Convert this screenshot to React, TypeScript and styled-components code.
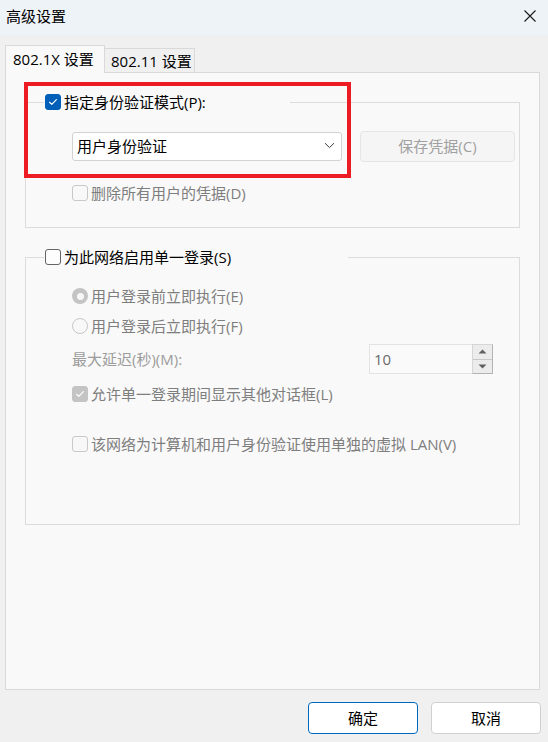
import React from "react";
import styled, { createGlobalStyle, css } from "styled-components";

const Global = createGlobalStyle`
  html, body { margin: 0; padding: 0; background: #f0f0f0; }
  body {
    font-family: "Open Sans", "Noto Sans CJK SC", sans-serif;
    font-size: 15px;
    color: #000;
  }
  * { box-sizing: border-box; }
`;

const Window = styled.div`
  position: relative;
  width: 548px;
  height: 742px;
  display: flex;
  flex-direction: column;
  background: #f0f0f0;
  overflow: hidden;
`;

const TitleBar = styled.div`
  flex: none;
  height: 35px;
  display: flex;
  align-items: center;
  justify-content: space-between;
  padding: 0 12px 3px 6px;
  background: #eef3f8;
`;

const Title = styled.span`
  font-size: 15px;
  line-height: 20px;
  color: #000;
`;

const CloseButton = styled.button`
  width: 12px;
  height: 12px;
  padding: 0;
  border: 0;
  background: none;
  display: flex;
`;

const TabStrip = styled.div`
  flex: none;
  display: flex;
  align-items: flex-end;
  height: 27px;
  margin-top: 10px;
  padding-left: 5px;
`;

const Tab = styled.div<{ $active?: boolean }>`
  position: relative;
  display: flex;
  align-items: center;
  font-size: 15px;
  line-height: 20px;
  border: 1px solid #d9d9d9;
  border-bottom: none;
  white-space: nowrap;
  ${({ $active }) =>
    $active
      ? css`
          z-index: 1;
          height: 28px;
          margin-bottom: -1px;
          width: 100px;
          padding: 0 0 1px 7px;
          background: #f9f9f9;
        `
      : css`
          height: 24px;
          width: 91px;
          margin-left: -1px;
          padding: 0 0 0 6px;
          background: #f0f0f0;
        `}
`;

const Panel = styled.div`
  flex: none;
  width: 535px;
  height: 618px;
  margin-left: 5px;
  border: 1px solid #d9d9d9;
  background: #f9f9f9;
  padding: 29px 19px 0 19px;
  display: flex;
  flex-direction: column;
`;

const GroupBox = styled.div<{ $gap?: number }>`
  border: 1px solid #dcdcdc;
  display: flex;
  flex-direction: column;
  margin-top: ${({ $gap }) => $gap ?? 0}px;
`;

const Legend = styled.div<{ $width: number }>`
  display: flex;
  align-items: center;
  gap: 3px;
  height: 18px;
  width: ${({ $width }) => $width}px;
  margin: -10px 0 0 18px;
  padding-left: 1px;
  background: #f9f9f9;
  font-size: 15px;
  line-height: 18px;
  color: #000;
  white-space: nowrap;
`;

const GroupContent = styled.div<{ $bottom: number }>`
  display: flex;
  flex-direction: column;
  padding: 0 0 ${({ $bottom }) => $bottom}px 46px;
`;

const Row = styled.div<{ $top: number }>`
  display: flex;
  align-items: center;
  gap: 3px;
  height: 20px;
  margin-top: ${({ $top }) => $top}px;
  white-space: nowrap;
`;

const ComboRow = styled.div`
  display: flex;
  align-items: center;
  gap: 18px;
  height: 31px;
  margin-top: 20px;
`;

const Combo = styled.div`
  width: 270px;
  height: 29px;
  display: flex;
  align-items: center;
  justify-content: space-between;
  padding: 0 6px 2px 4px;
  background: #ffffff;
  border: 1px solid #d3d3d3;
  border-radius: 3px;
  font-size: 15px;
  line-height: 20px;
  color: #000;
`;

const DisabledButton = styled.button`
  width: 155px;
  height: 31px;
  padding: 0 0 1px;
  background: #f5f5f5;
  border: 1px solid #e5e5e5;
  border-radius: 4px;
  font-family: inherit;
  font-size: 15px;
  line-height: 20px;
  color: #a0a0a0;
`;

const Label = styled.span<{ $tone?: "normal" | "disabled" }>`
  font-size: 15px;
  line-height: 20px;
  color: ${({ $tone }) => ($tone === "disabled" ? "#7e7e7e" : "#000")};
`;

const Box = styled.span<{ $checked?: boolean; $disabled?: boolean }>`
  flex: none;
  width: 16px;
  height: 16px;
  border-radius: 3px;
  display: flex;
  align-items: center;
  justify-content: center;
  ${({ $checked, $disabled }) =>
    $checked
      ? css`
          background: ${$disabled ? "#c4c4c4" : "#005fb8"};
          border: 1px solid ${$disabled ? "#c4c4c4" : "#005fb8"};
        `
      : css`
          background: ${$disabled ? "#f8f8f8" : "#fdfdfd"};
          border: 1px solid ${$disabled ? "#c9c9c9" : "#646464"};
        `}
`;

const Radio = styled.span<{ $checked?: boolean }>`
  flex: none;
  width: 16px;
  height: 16px;
  border-radius: 50%;
  display: flex;
  align-items: center;
  justify-content: center;
  ${({ $checked }) =>
    $checked
      ? css`
          background: #c4c4c4;
          &::after {
            content: "";
            width: 7px;
            height: 7px;
            border-radius: 50%;
            background: #f7f7f7;
          }
        `
      : css`
          background: #f8f8f8;
          border: 1px solid #c7c7c7;
        `}
`;

const SpinRow = styled.div`
  display: flex;
  align-items: center;
  height: 30px;
  margin-top: 8px;
`;

const SpinLabel = styled.span`
  flex: 0 0 297px;
  font-size: 15px;
  line-height: 20px;
  color: #9c9c9c;
`;

const SpinField = styled.div`
  width: 124px;
  height: 30px;
  display: flex;
`;

const SpinEdit = styled.div`
  flex: 1;
  display: flex;
  align-items: center;
  padding-left: 4px;
  background: #fafafa;
  border: 1px solid #e3e3e3;
  border-right: none;
  font-size: 15px;
  line-height: 20px;
  color: #6a6a6a;
`;

const SpinButtons = styled.div`
  width: 21px;
  display: flex;
  flex-direction: column;
  border: 1px solid #b4b4b4;
  border-top-color: #d6d6d6;
  border-left-color: #d6d6d6;
  background: #e6e6e6;
`;

const SpinButton = styled.div<{ $down?: boolean }>`
  flex: 1;
  display: flex;
  align-items: center;
  justify-content: center;
  background: #ececec;
  ${({ $down }) =>
    $down
      ? css`
          border-top: 1px solid #c8c8c8;
        `
      : css``}
`;

const Footer = styled.div`
  flex: none;
  display: flex;
  justify-content: flex-end;
  gap: 13px;
  margin-top: 12px;
  padding-right: 7px;
`;

const DialogButton = styled.button<{ $primary?: boolean }>`
  width: 110px;
  height: 32px;
  padding: 0;
  background: #ffffff;
  border: 1px solid ${({ $primary }) => ($primary ? "#0067c0" : "#d0d0d0")};
  border-radius: 4px;
  font-family: inherit;
  font-size: 15px;
  line-height: 20px;
  color: #000;
`;

const Annotation = styled.div`
  position: absolute;
  left: 24px;
  top: 82px;
  width: 327px;
  height: 96px;
  border: 4px solid #ed1c24;
  pointer-events: none;
`;

const Check = ({ color = "#fff" }: { color?: string }) => (
  <svg width="12" height="12" viewBox="0 0 12 12">
    <polyline
      points="2.6,6.3 4.8,8.4 9.4,3.6"
      fill="none"
      stroke={color}
      strokeWidth="1.2"
      strokeLinecap="round"
      strokeLinejoin="round"
    />
  </svg>
);

const Chevron = () => (
  <svg width="11" height="7" viewBox="0 0 11 7">
    <polyline points="1,1.2 5.5,5.6 10,1.2" fill="none" stroke="#3a3a3a" strokeWidth="1" />
  </svg>
);

const Arrow = ({ down }: { down?: boolean }) => (
  <svg width="9" height="5" viewBox="0 0 9 5">
    <polygon points={down ? "0.5,0.5 8.5,0.5 4.5,4.5" : "0.5,4.5 8.5,4.5 4.5,0.5"} fill="#606060" />
  </svg>
);

export default function App() {
  return (
    <>
      <Global />
      <Window>
        <TitleBar>
          <Title>高级设置</Title>
          <CloseButton aria-label="关闭">
            <svg width="12" height="12" viewBox="0 0 12 12">
              <path d="M0.5 0.5 L11.5 11.5 M11.5 0.5 L0.5 11.5" stroke="#1a1a1a" strokeWidth="1.1" />
            </svg>
          </CloseButton>
        </TitleBar>

        <TabStrip>
          <Tab $active>802.1X 设置</Tab>
          <Tab>802.11 设置</Tab>
        </TabStrip>

        <Panel>
          <GroupBox>
            <Legend $width={246}>
              <Box $checked>
                <Check />
              </Box>
              <span>指定身份验证模式(P):</span>
            </Legend>
            <GroupContent $bottom={24}>
              <ComboRow>
                <Combo>
                  <span>用户身份验证</span>
                  <Chevron />
                </Combo>
                <DisabledButton disabled>保存凭据(C)</DisabledButton>
              </ComboRow>
              <Row $top={21}>
                <Box $disabled />
                <Label $tone="disabled">删除所有用户的凭据(D)</Label>
              </Row>
            </GroupContent>
          </GroupBox>

          <GroupBox $gap={29}>
            <Legend $width={304}>
              <Box />
              <span>为此网络启用单一登录(S)</span>
            </Legend>
            <GroupContent $bottom={70}>
              <Row $top={20}>
                <Radio $checked />
                <Label $tone="disabled">用户登录前立即执行(E)</Label>
              </Row>
              <Row $top={10}>
                <Radio />
                <Label $tone="disabled">用户登录后立即执行(F)</Label>
              </Row>
              <SpinRow>
                <SpinLabel>最大延迟(秒)(M):</SpinLabel>
                <SpinField>
                  <SpinEdit>10</SpinEdit>
                  <SpinButtons>
                    <SpinButton>
                      <Arrow />
                    </SpinButton>
                    <SpinButton $down>
                      <Arrow down />
                    </SpinButton>
                  </SpinButtons>
                </SpinField>
              </SpinRow>
              <Row $top={10}>
                <Box $checked $disabled>
                  <Check />
                </Box>
                <Label $tone="disabled">允许单一登录期间显示其他对话框(L)</Label>
              </Row>
              <Row $top={30}>
                <Box $disabled />
                <Label $tone="disabled">该网络为计算机和用户身份验证使用单独的虚拟 LAN(V)</Label>
              </Row>
            </GroupContent>
          </GroupBox>
        </Panel>

        <Footer>
          <DialogButton $primary>确定</DialogButton>
          <DialogButton>取消</DialogButton>
        </Footer>

        <Annotation />
      </Window>
    </>
  );
}
